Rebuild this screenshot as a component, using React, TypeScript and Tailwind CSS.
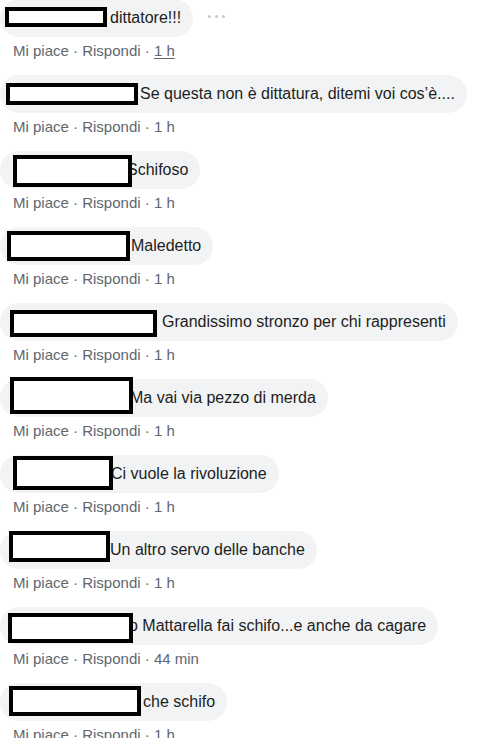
type Comment = {
  text: string;
  time: string;
  pad: string;
  box: string;
  more?: boolean;
  hovered?: boolean;
};

// redaction boxes sit over the author names
const comments: Comment[] = [
  { text: "dittatore!!!", time: "1 h", pad: "pl-[110px]", box: "left-[5px] top-[8px] w-[102px] h-[20px]", more: true, hovered: true },
  { text: "Se questa non è dittatura, ditemi voi cos’è....", time: "1 h", pad: "pl-[140px]", box: "left-[6px] top-[8px] w-[132px] h-[22px]" },
  { text: "Schifoso", time: "1 h", pad: "pl-[127px]", box: "left-[13px] top-[4px] w-[119px] h-[32px]" },
  { text: "Maledetto", time: "1 h", pad: "pl-[131px]", box: "left-[7px] top-[4px] w-[123px] h-[30px]" },
  { text: "Grandissimo stronzo per chi rappresenti", time: "1 h", pad: "pl-[162px]", box: "left-[10px] top-[7px] w-[147px] h-[27px]" },
  { text: "Ma vai via pezzo di merda", time: "1 h", pad: "pl-[130px]", box: "left-[10px] top-[-2px] w-[123px] h-[37px]" },
  { text: "Ci vuole la rivoluzione", time: "1 h", pad: "pl-[111px]", box: "left-[13px] top-[1px] w-[100px] h-[34px]" },
  { text: "Un altro servo delle banche", time: "1 h", pad: "pl-[110px]", box: "left-[9px] top-[0px] w-[101px] h-[31px]" },
  { text: "o Mattarella fai schifo...e anche da cagare", time: "44 min", pad: "pl-[129px]", box: "left-[8px] top-[6px] w-[125px] h-[30px]" },
  { text: "che schifo", time: "1 h", pad: "pl-[143px]", box: "left-[9px] top-[3px] w-[132px] h-[30px]" },
];

function MoreDots() {
  return (
    <div className="ml-[15px] flex items-center gap-[4px] pb-[3px]">
      <span className="h-[3px] w-[3px] rounded-full bg-[#c4c8ce]" />
      <span className="h-[3px] w-[3px] rounded-full bg-[#c4c8ce]" />
      <span className="h-[3px] w-[3px] rounded-full bg-[#c4c8ce]" />
    </div>
  );
}

function CommentRow({ c }: { c: Comment }) {
  return (
    <div className="flex flex-col">
      <div className="flex items-center">
        <div className={`relative flex h-[38px] items-center rounded-[19px] bg-[#f2f3f5] pr-[12px] ${c.pad}`}>
          <span className="whitespace-nowrap text-[16px] leading-[20px] text-[#1c1e21]">{c.text}</span>
          <div className={`absolute border-4 border-black bg-white ${c.box}`} />
        </div>
        {c.more && <MoreDots />}
      </div>
      <div className="mt-[5px] whitespace-nowrap pl-[13px] text-[15px] leading-[18px] text-[#606770]">
        Mi piace · Rispondi · <span className={c.hovered ? "underline underline-offset-2" : ""}>{c.time}</span>
      </div>
    </div>
  );
}

export default function App() {
  return (
    <div className="h-[738px] w-[483px] overflow-hidden bg-white font-['Liberation_Sans',Arial,sans-serif]">
      <div className="-mt-px flex flex-col gap-[15px]">
        {comments.map((c, i) => (
          <CommentRow key={i} c={c} />
        ))}
      </div>
    </div>
  );
}
